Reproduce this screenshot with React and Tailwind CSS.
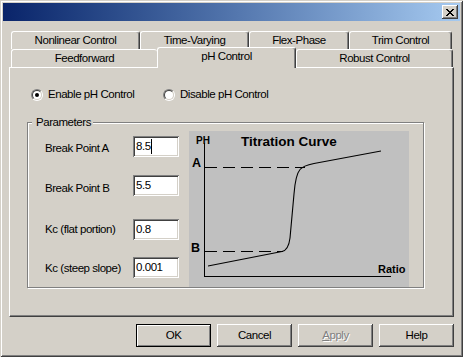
import React from "react";

const bevelOut =
  "shadow-[inset_-1px_-1px_#404040,inset_1px_1px_#ffffff,inset_-2px_-2px_#808080,inset_2px_2px_#d4d0c8]";

function Tab({ className, children }) {
  return (
    <div
      className={
        "flex items-center justify-center border-t border-l border-white rounded-t-[3px] " +
        className
      }
    >
      {children}
    </div>
  );
}

function Radio({ checked }) {
  return (
    <div className="w-[12px] h-[12px] rounded-full border border-t-[#808080] border-l-[#808080] border-b-white border-r-white">
      <div className="w-full h-full rounded-full border border-t-[#404040] border-l-[#404040] border-b-[#d4d0c8] border-r-[#d4d0c8] bg-white flex items-center justify-center">
        {checked && <div className="w-[4px] h-[4px] rounded-full bg-black" />}
      </div>
    </div>
  );
}

function Field({ value, caret }) {
  return (
    <div className="w-[46px] h-[21px] bg-white pl-[3px] flex items-center shadow-[inset_1px_1px_#808080,inset_-1px_-1px_#ffffff,inset_2px_2px_#404040,inset_-2px_-2px_#d4d0c8]">
      <span className={caret ? "border-r border-black leading-[15px] pr-0" : "leading-[15px]"}>
        {value}
      </span>
    </div>
  );
}

function Btn({ children, className = "" }) {
  return (
    <div
      className={
        "w-[75px] h-[23px] flex items-center justify-center " + className
      }
    >
      {children}
    </div>
  );
}

export default function App() {
  return (
    <div className="w-[463px] h-[357px] bg-[#d4d0c8] p-[3px] flex flex-col font-['Liberation_Sans',Arial,sans-serif] text-[11.5px] tracking-[-0.45px] text-black shadow-[inset_1px_1px_#d4d0c8,inset_-1px_-1px_#404040,inset_2px_2px_#ffffff,inset_-2px_-2px_#808080]">
      {/* Title bar */}
      <div className="h-[18px] bg-gradient-to-r from-[#0a246a] to-[#a6caf0] flex items-center justify-end pr-[2px]">
        <div className={"w-[16px] h-[14px] bg-[#d4d0c8] flex items-center justify-center " + bevelOut}>
          <svg width="8" height="7" viewBox="0 0 8 7" shapeRendering="crispEdges">
            <path
              d="M0 0h2v1H0zM6 0h2v1H6zM1 1h2v1H1zM5 1h2v1H5zM2 2h4v1H2zM3 3h2v1H3zM2 4h4v1H2zM1 5h2v1H1zM5 5h2v1H5zM0 6h2v1H0zM6 6h2v1H6z"
              fill="#000"
            />
          </svg>
        </div>
      </div>

      {/* Tab control */}
      <div className="ml-[6px] w-[445px] mt-[10px] flex flex-col">
        <div className="flex pl-[2px] h-[18px]">
          <Tab className="w-[129px] h-[18px] border-r border-r-[#404040] shadow-[inset_-1px_0_#808080]">Nonlinear Control</Tab>
          <Tab className="w-[109px] h-[18px] border-r border-r-[#404040] shadow-[inset_-1px_0_#808080]">Time-Varying</Tab>
          <Tab className="w-[100px] h-[18px] border-r border-r-[#404040] shadow-[inset_-1px_0_#808080]">Flex-Phase</Tab>
          <Tab className="w-[103px] h-[18px] border-r border-r-[#404040] shadow-[inset_-1px_0_#808080]">Trim Control</Tab>
        </div>
        <div className="flex pl-[2px] h-[18px] items-start">
          <Tab className="w-[146px] h-[18px]">Feedforward</Tab>
          <Tab className="w-[139px] h-[21px] -mt-[2px] relative z-10 bg-[#d4d0c8] border-r border-r-[#404040] shadow-[inset_-1px_0_#808080] pb-[2px]">
            pH Control
          </Tab>
          <Tab className="w-[157px] h-[18px] border-r border-r-[#404040] shadow-[inset_-1px_0_#808080]">Robust Control</Tab>
        </div>

        {/* Panel */}
        <div className="h-[250px] border-t border-l border-white border-r border-b border-r-[#404040] border-b-[#404040] shadow-[inset_-1px_-1px_#808080] flex flex-col">
          <div className="mt-[20px] pl-[21px] flex h-[13px] items-center">
            <div className="w-[132px] flex items-center gap-[5px]">
              <Radio checked />
              <span>Enable pH Control</span>
            </div>
            <div className="flex items-center gap-[5px]">
              <Radio />
              <span>Disable pH Control</span>
            </div>
          </div>

          <fieldset className="ml-[17px] mt-[14px] w-[397px] h-[173px] min-w-0 p-0 m-0 border border-[#808080] shadow-[1px_1px_0_#ffffff,inset_1px_1px_0_#ffffff]">
            <legend className="ml-[4px] pl-[4px] pr-[2px] leading-[14px] bg-[#d4d0c8]">Parameters</legend>
            <div className="flex">
              <div className="pl-[17px] flex flex-col">
                <div className="mt-[7px] flex items-center h-[21px]">
                  <span className="w-[88px] pt-[4px]">Break Point A</span>
                  <Field value="8.5" caret />
                </div>
                <div className="mt-[18px] flex items-center h-[21px]">
                  <span className="w-[88px] pt-[7px]">Break Point B</span>
                  <Field value="5.5" />
                </div>
                <div className="mt-[23px] flex items-center h-[21px]">
                  <span className="w-[88px]">Kc (flat portion)</span>
                  <Field value="0.8" />
                </div>
                <div className="mt-[17px] flex items-center h-[21px]">
                  <span className="w-[88px] pt-[2px]">Kc (steep slope)</span>
                  <Field value="0.001" />
                </div>
              </div>
              <div className="ml-[10px] mt-[2px] w-[220px] h-[156px] bg-[#c0c0c0]">
                <svg width="220" height="156" viewBox="0 0 220 156" fontFamily="'Liberation Sans', Arial, sans-serif" fontWeight="bold" letterSpacing="0">
                  <text x="7" y="13" fontSize="10">PH</text>
                  <text x="52" y="15" fontSize="13.5">Titration Curve</text>
                  <text x="3" y="36" fontSize="12.5">A</text>
                  <text x="2" y="121" fontSize="12.5">B</text>
                  <text x="189" y="142" fontSize="11">Ratio</text>
                  <line x1="15.5" y1="12" x2="15.5" y2="146" stroke="#000" strokeWidth="1" shapeRendering="crispEdges" />
                  <line x1="15" y1="145.5" x2="202" y2="145.5" stroke="#000" strokeWidth="1" shapeRendering="crispEdges" />
                  <line x1="16" y1="36.5" x2="116" y2="36.5" stroke="#000" strokeWidth="1" strokeDasharray="12 6" shapeRendering="crispEdges" />
                  <line x1="16" y1="120.5" x2="94" y2="120.5" stroke="#000" strokeWidth="1" strokeDasharray="12 6" shapeRendering="crispEdges" />
                  <path
                    d="M19 135 L93 120.5 C98 119.5 100 115 101 107 L105 63 C106 50 108 42 111 38.5 C113 36 118 34 125 32.5 L192 20"
                    fill="none"
                    stroke="#000"
                    strokeWidth="1.1"
                  />
                </svg>
              </div>
            </div>
          </fieldset>
        </div>

        {/* Buttons */}
        <div className="mt-[7px] flex justify-end gap-[6px]">
          <Btn className="border border-black shadow-[inset_1px_1px_#ffffff,inset_-1px_-1px_#808080]">OK</Btn>
          <Btn className={bevelOut}>Cancel</Btn>
          <Btn className={bevelOut + " text-[#808080]"}>
            <span className="[text-shadow:1px_1px_0_#ffffff]">
              <span className="underline">A</span>pply
            </span>
          </Btn>
          <Btn className={bevelOut}>Help</Btn>
        </div>
      </div>
    </div>
  );
}
